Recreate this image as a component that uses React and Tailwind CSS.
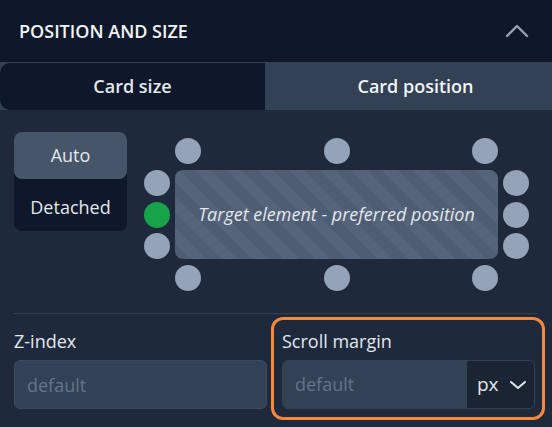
import React from 'react'

function Dot({ active }) {
  return (
    <span
      className={`block w-[26px] h-[26px] rounded-full ${
        active ? 'bg-[#16a34a]' : 'bg-[#94a3b8]'
      }`}
    />
  )
}

function PositionDiagram() {
  return (
    <div className="grid grid-cols-[26px_1fr_26px] grid-rows-[26px_89px_26px] gap-x-[5px] gap-y-[6px] flex-1 mt-[6px] mr-[9px]">
      <div />
      <div className="flex justify-between">
        <Dot />
        <Dot />
        <Dot />
      </div>
      <div />

      <div className="flex flex-col justify-between">
        <Dot />
        <Dot active />
        <Dot />
      </div>
      <div className="rounded-lg flex items-center justify-center bg-[repeating-linear-gradient(45deg,#4f5d73_0px,#4f5d73_11px,#55647a_11px,#55647a_22px)]">
        <span className="italic text-[18px] text-[#e2e8f0]">
          Target element - preferred position
        </span>
      </div>
      <div className="flex flex-col justify-between">
        <Dot />
        <Dot />
        <Dot />
      </div>

      <div />
      <div className="flex justify-between">
        <Dot />
        <Dot />
        <Dot />
      </div>
      <div />
    </div>
  )
}

export default function App() {
  return (
    <div
      className="w-[552px] min-h-[427px] bg-[#1e293b] text-[#e2e8f0] overflow-hidden"
      style={{ fontFamily: '"Open Sans", "Liberation Sans", sans-serif' }}
    >
      {/* Header */}
      <div className="bg-[#0f172a] h-[63px] flex items-center justify-between pl-[19px] pr-[23px] border-b border-[#334155]">
        <h2 className="text-[18px] font-semibold uppercase text-[#f1f5f9]">
          Position and size
        </h2>
        <svg width="24" height="14" viewBox="0 0 24 14" fill="none">
          <polyline
            points="2,12 12,2 22,12"
            stroke="#94a3b8"
            strokeWidth="2.4"
            strokeLinecap="round"
            strokeLinejoin="round"
          />
        </svg>
      </div>

      {/* Tabs */}
      <div className="flex h-[47px] bg-[#334155]">
        <button className="w-[265px] bg-[#0f172a] rounded-l-[10px] text-[18px] font-semibold text-[#e2e8f0]">
          Card size
        </button>
        <button className="flex-1 pl-[14px] text-[18px] font-semibold text-[#f1f5f9]">
          Card position
        </button>
      </div>

      {/* Position */}
      <div className="px-[14px] pt-[22px]">
        <div className="flex items-start gap-[17px]">
          <div className="w-[113px] bg-[#0f172a] rounded-lg flex flex-col">
            <button className="h-[47px] rounded-lg bg-[#475569] text-[18px] text-[#e2e8f0]">
              Auto
            </button>
            <button className="h-[52px] pt-[4px] text-[18px] text-[#e2e8f0]">
              Detached
            </button>
          </div>
          <PositionDiagram />
        </div>

        <div className="border-t border-[#334155] mt-[22px]" />

        <div className="grid grid-cols-2 gap-[15px] pt-[15px] pr-[3px]">
          <div>
            <label className="block text-[18px] font-medium leading-[24px] mb-[7px] text-[#e2e8f0]">
              Z-index
            </label>
            <input
              placeholder="default"
              className="w-full h-[49px] rounded-md bg-[#334155] border border-[#3b4a5e] px-[12px] text-[18px] placeholder:text-[#64748b] outline-none"
            />
          </div>
          <div className="relative">
            <div className="absolute -left-[11px] -right-[10px] -top-[12px] -bottom-[11px] border-[3px] border-[#f4883b] rounded-[12px] pointer-events-none" />
            <label className="block text-[18px] font-medium leading-[24px] mb-[7px] text-[#e2e8f0]">
              Scroll margin
            </label>
            <div className="flex h-[49px] rounded-md border border-[#334155] overflow-hidden">
              <input
                placeholder="default"
                className="flex-1 min-w-0 bg-[#334155] px-[12px] text-[18px] placeholder:text-[#64748b] outline-none"
              />
              <div className="w-[68px] bg-[#1a2433] flex items-center justify-between pl-[10px] pr-[7px] border-l border-[#334155]">
                <span className="text-[19px] text-[#e2e8f0]">px</span>
                <svg width="18" height="10" viewBox="0 0 18 10" fill="none">
                  <polyline
                    points="2,2 9,8 16,2"
                    stroke="#e2e8f0"
                    strokeWidth="2"
                    strokeLinecap="round"
                    strokeLinejoin="round"
                  />
                </svg>
              </div>
            </div>
          </div>
        </div>
      </div>
    </div>
  )
}
